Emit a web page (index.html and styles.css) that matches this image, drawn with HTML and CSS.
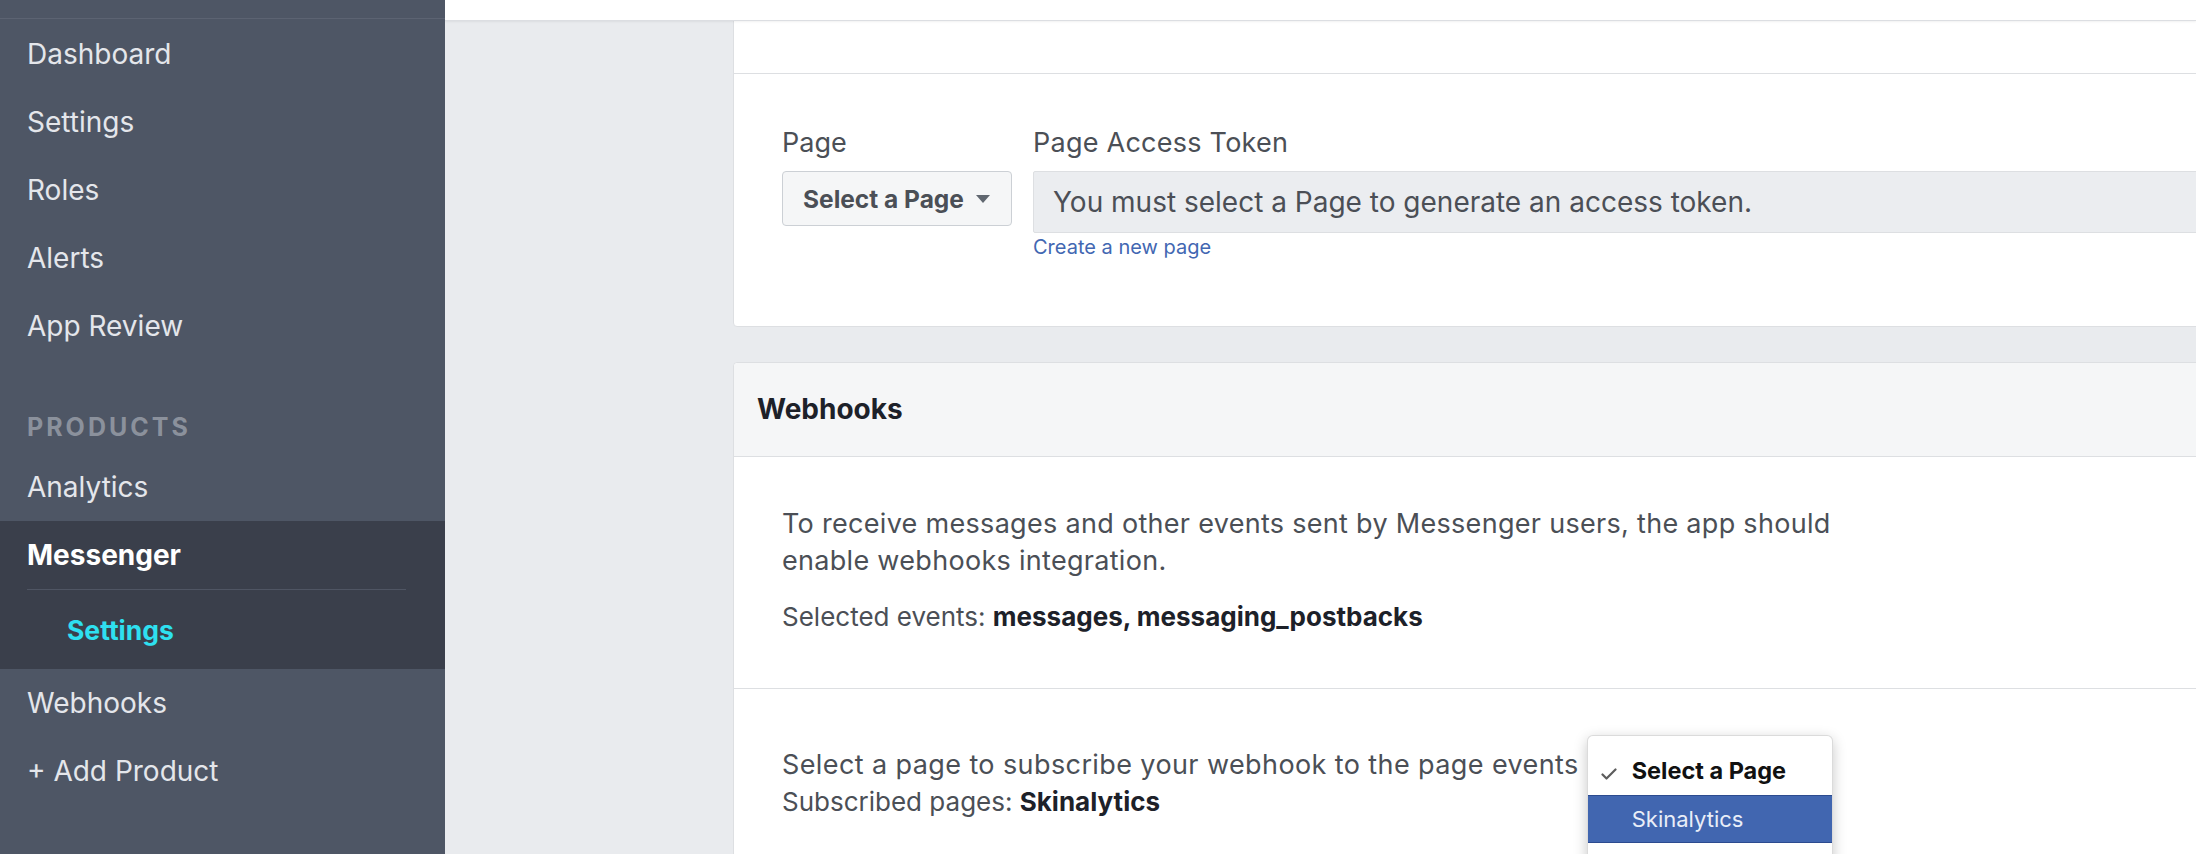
FILE: index.html
```html
<!DOCTYPE html>
<html lang="en">
<head>
<meta charset="utf-8">
<title>Messenger Settings</title>
<link rel="stylesheet" href="styles.css">
</head>
<body>
<div class="app">
  <aside class="sidebar">
    <div class="sidebar-top"></div>
    <nav class="nav">
      <a class="nav-item" href="#">Dashboard</a>
      <a class="nav-item" href="#">Settings</a>
      <a class="nav-item" href="#">Roles</a>
      <a class="nav-item" href="#">Alerts</a>
      <a class="nav-item" href="#">App Review</a>
      <div class="nav-heading">PRODUCTS</div>
      <a class="nav-item" href="#">Analytics</a>
      <div class="nav-group">
        <a class="nav-item nav-item--strong" href="#">Messenger</a>
        <div class="nav-divider"></div>
        <a class="nav-sub" href="#">Settings</a>
      </div>
      <a class="nav-item" href="#">Webhooks</a>
      <a class="nav-item" href="#">+ Add Product</a>
    </nav>
  </aside>

  <main class="main">
    <header class="topbar"></header>
    <div class="content">
      <section class="card card--first">
        <div class="card-section card-section--intro">
          <p class="text">A page access token is required to send messages through the Send API.</p>
        </div>
        <div class="card-section token-section">
          <div class="field field--page">
            <label class="field-label">Page</label>
            <button class="select-btn" type="button">Select a Page <span class="caret"></span></button>
          </div>
          <div class="field field--token">
            <label class="field-label">Page Access Token</label>
            <div class="token-input">You must select a Page to generate an access token.</div>
            <a class="link" href="#">Create a new page</a>
          </div>
        </div>
      </section>

      <section class="card">
        <div class="card-header">Webhooks</div>
        <div class="card-section card-section--webhooks">
          <p class="text text--wrap">To receive messages and other events sent by Messenger users, the app should enable webhooks integration.</p>
          <p class="text text--events">Selected events: <strong>messages, messaging_postbacks</strong></p>
        </div>
        <div class="card-section card-section--subscribe">
          <div class="subscribe-row">
            <span class="text text--prompt">Select a page to subscribe your webhook to the page events</span>
            <div class="popup">
              <ul class="popup-menu">
                <li class="popup-item popup-item--checked">
                  <svg class="check" viewBox="0 0 16 12" width="16" height="12"><path d="M1.5 6.5 L5.5 10.5 L14.5 1.5" fill="none" stroke="#5c5c5c" stroke-width="2.2" stroke-linecap="round" stroke-linejoin="round"/></svg>
                  Select a Page
                </li>
                <li class="popup-item popup-item--active">Skinalytics</li>
                <li class="popup-item popup-item--empty"></li>
              </ul>
            </div>
          </div>
          <p class="text">Subscribed pages: <strong>Skinalytics</strong></p>
        </div>
      </section>
    </div>
  </main>
</div>
</body>
</html>
```

FILE: styles.css
```css
* { box-sizing: border-box; }

html, body {
  margin: 0;
  height: 854px;
  overflow: hidden;
}

body {
  font-family: Inter, "Liberation Sans", Arial, sans-serif;
  background: #e9ebee;
  color: #4b4f56;
}

.app {
  display: flex;
  height: 854px;
}

/* ---------- Sidebar ---------- */
.sidebar {
  flex: 0 0 445px;
  width: 445px;
  background: #4e5665;
  color: #e4e6eb;
}

.sidebar-top {
  height: 19px;
  border-bottom: 1px solid #5c6372;
}

.nav {
  display: flex;
  flex-direction: column;
  padding-top: 1px;
}

.nav-item {
  display: block;
  height: 68px;
  line-height: 68px;
  padding-left: 27px;
  font-size: 28px;
  color: #e4e6eb;
  text-decoration: none;
}

.nav-heading {
  padding: 41px 0 0 27px;
  line-height: 52px;
  font-size: 25px;
  font-weight: 700;
  letter-spacing: 3px;
  color: #8b919c;
}

.nav-group {
  background: #3a3f4b;
}

.nav-item--strong {
  font-weight: 700;
  color: #ffffff;
}

.nav-divider {
  height: 0;
  margin: 0 39px 0 27px;
  border-top: 1px solid #4f5563;
}

.nav-sub {
  display: block;
  height: 79px;
  line-height: 81px;
  padding-left: 67px;
  font-size: 26.5px;
  font-weight: 700;
  color: #2ee0f0;
  text-decoration: none;
}

/* ---------- Main ---------- */
.main {
  flex: 1;
  min-width: 0;
  position: relative;
  overflow: hidden;
}

.topbar {
  position: absolute;
  top: 0;
  left: 0;
  right: 0;
  height: 21px;
  background: #ffffff;
  border-bottom: 1px solid #dcdee2;
  box-shadow: 0 1px 2px rgba(0, 0, 0, 0.06);
  z-index: 2;
}

.content {
  padding-left: 288px;
}

.card {
  width: 1600px;
  background: #ffffff;
  border: 1px solid #dddfe2;
  border-radius: 4px;
}

.card--first {
  margin-top: -61px; /* page is scrolled */
}

.card + .card {
  margin-top: 35px;
}

.card-section {
  padding: 48px 48px 49px 48px;
  border-top: 1px solid #dddfe2;
}

.card-section--intro {
  border-top: none;
  padding-top: 47px;
}

.text {
  margin: 0;
  font-size: 26px;
  line-height: 37px;
  color: #4b4f56;
}

.text strong {
  font-weight: 700;
  color: #1d2129;
}

/* token section */
.token-section {
  display: flex;
  gap: 21px;
  padding-top: 53px;
  padding-bottom: 67px;
}

.field {
  display: flex;
  flex-direction: column;
  align-items: flex-start;
}

.field--page {
  flex: 0 0 230px;
}

.field--token {
  flex: 1;
  align-items: stretch;
}

.field-label {
  display: block;
  font-size: 27px;
  line-height: 32px;
  margin-bottom: 12px;
  color: #4b4f56;
}

.field--token .field-label {
  letter-spacing: 0.25px;
}

.select-btn {
  display: flex;
  align-items: center;
  width: 230px;
  height: 55px;
  padding: 0 0 0 20px;
  background: #f5f6f7;
  border: 1px solid #ccd0d5;
  border-radius: 4px;
  font-family: inherit;
  font-size: 24.5px;
  font-weight: 700;
  color: #4b4f56;
  white-space: nowrap;
}

.caret {
  margin-left: 12px;
  width: 0;
  height: 0;
  border-left: 7px solid transparent;
  border-right: 7px solid transparent;
  border-top: 8px solid #606770;
}

.token-input {
  height: 62px;
  line-height: 60px;
  padding-left: 19px;
  background: #ebedf0;
  border: 1px solid #dddfe2;
  border-radius: 2px;
  font-size: 28px;
  color: #4b4f56;
}

.link {
  margin-top: 2px;
  font-size: 20px;
  line-height: 24px;
  color: #4267b2;
  text-decoration: none;
}

/* webhooks card */
.card-header {
  height: 94px;
  line-height: 93px;
  padding-left: 23px;
  background: #f5f6f7;
  border-bottom: 1px solid #dddfe2;
  border-radius: 4px 4px 0 0;
  font-size: 28px;
  font-weight: 700;
  color: #1d2129;
}

.card-header + .card-section {
  border-top: none;
}

.card-section--webhooks {
  padding-top: 48px;
  padding-bottom: 53px;
}

.text--wrap {
  max-width: 1090px;
  font-size: 27px;
  letter-spacing: 0.3px;
}

.text--events {
  margin-top: 19px;
}

.text--prompt {
  font-size: 27px;
  letter-spacing: 0.4px;
}

.card-section--subscribe {
  padding-top: 57px;
  padding-bottom: 80px;
}

.subscribe-row {
  display: flex;
  align-items: flex-start;
}

.popup {
  position: relative;
  margin-left: 8px;
  width: 246px;
  height: 37px;
}

.popup-menu {
  position: absolute;
  top: -11px;
  left: 0;
  width: 246px;
  height: 260px;
  margin: 0;
  padding: 11px 0 0 0;
  list-style: none;
  background: #ffffff;
  border: 1px solid rgba(0, 0, 0, 0.14);
  border-radius: 6px;
  box-shadow: 0 4px 14px rgba(0, 0, 0, 0.22);
  z-index: 3;
}

.popup-item {
  position: relative;
  height: 48px;
  line-height: 48px;
  padding-left: 44px;
  font-size: 22px;
  color: #111111;
  white-space: nowrap;
}

.popup-item--checked {
  font-size: 23.5px;
  font-weight: 700;
}

.check {
  position: absolute;
  left: 13px;
  top: 21px;
}

.popup-item--active {
  background: #4166b0;
  border-top: 1px solid #2c4b8f;
  border-bottom: 1px solid #2c4b8f;
  line-height: 46px;
  color: #e9eef8;
}
```
